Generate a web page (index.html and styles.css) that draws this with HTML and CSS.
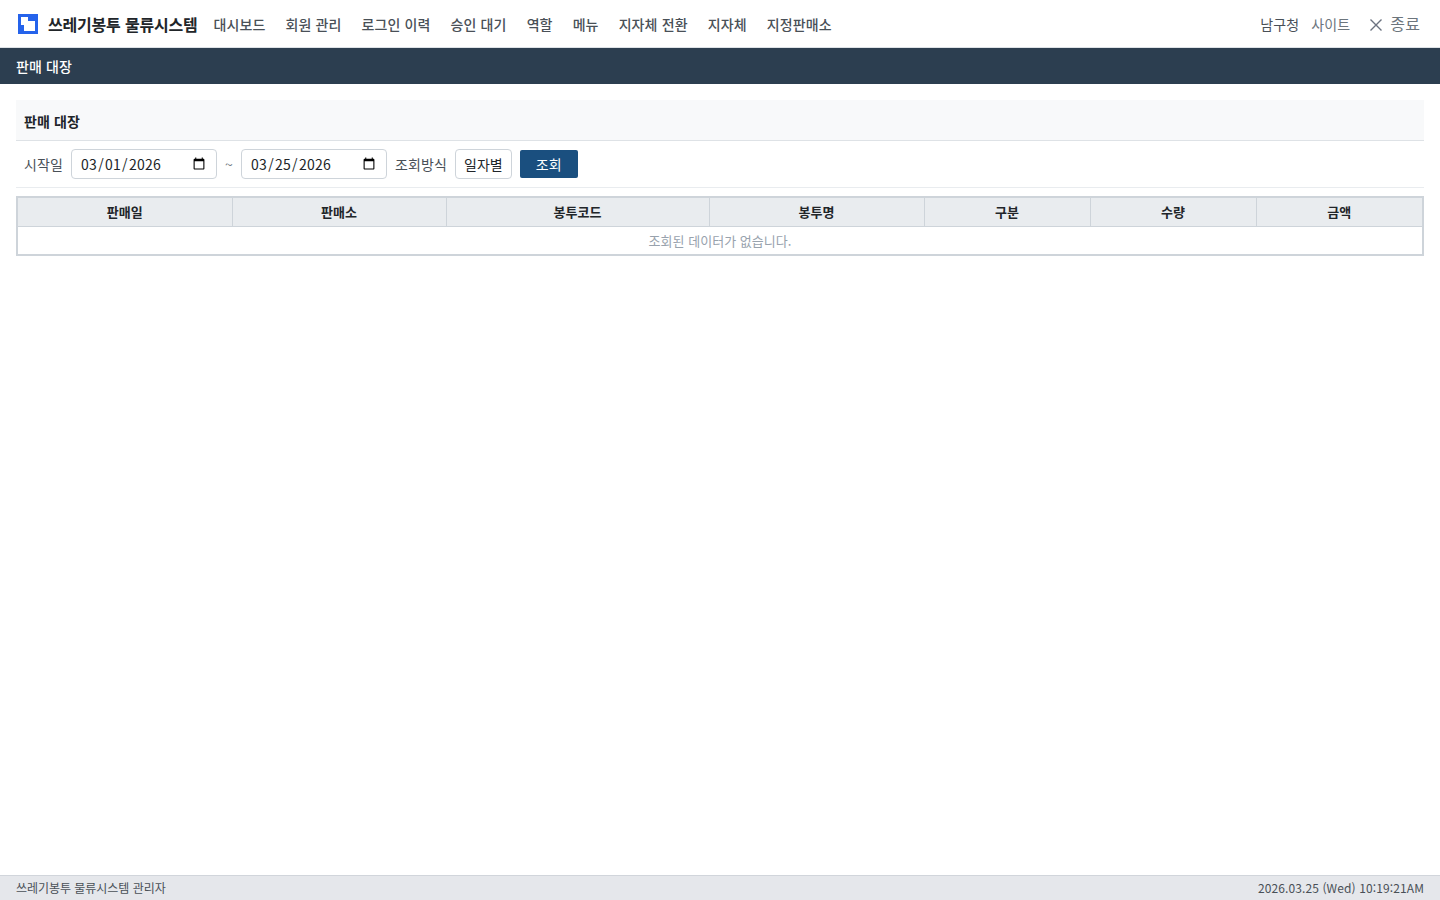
FILE: index.html
```html
<!DOCTYPE html>
<html lang="ko">
<head>
    <meta charset="UTF-8">
    <meta name="viewport" content="width=device-width, initial-scale=1.0">
    <title>판매 대장</title>
    <link rel="stylesheet" href="styles.css">
</head>
<body>
    <header class="topbar">
        <div class="brand">
            <svg class="brand-logo" width="20" height="20" viewBox="0 0 20 20">
                <rect width="20" height="20" fill="#2563eb"/>
                <path d="M3 3H10V7H17V17H6V11H3Z" fill="#fff"/>
            </svg>
            <span class="brand-name">쓰레기봉투 물류시스템</span>
        </div>
        <nav class="nav-menu">
            <a>대시보드</a>
            <a>회원 관리</a>
            <a>로그인 이력</a>
            <a>승인 대기</a>
            <a>역할</a>
            <a>메뉴</a>
            <a>지자체 전환</a>
            <a>지자체</a>
            <a>지정판매소</a>
        </nav>
        <div class="user-menu">
            <span class="user-org">남구청</span>
            <span class="user-site">사이트</span>
            <span class="user-exit">
                <svg width="14" height="14" viewBox="0 0 14 14"><path d="M1.5 1.5L12.5 12.5M12.5 1.5L1.5 12.5" stroke="#6b7280" stroke-width="1.4" fill="none"/></svg>
                <span>종료</span>
            </span>
        </div>
    </header>
    <div class="title-bar">판매 대장</div>
    <main class="content">
        <h2 class="panel-title">판매 대장</h2>
        <div class="search-row">
            <label>시작일</label>
            <input class="date-input" type="date" value="2026-03-01">
            <span class="tilde">~</span>
            <input class="date-input" type="date" value="2026-03-25">
            <label>조회방식</label>
            <button class="btn-mode" type="button">일자별</button>
            <button class="btn-search" type="button">조회</button>
        </div>
        <table class="grid">
            <thead>
                <tr>
                    <th class="col-date">판매일</th>
                    <th class="col-shop">판매소</th>
                    <th class="col-code">봉투코드</th>
                    <th class="col-name">봉투명</th>
                    <th class="col-type">구분</th>
                    <th class="col-qty">수량</th>
                    <th class="col-amount">금액</th>
                </tr>
            </thead>
            <tbody>
                <tr><td colspan="7">조회된 데이터가 없습니다.</td></tr>
            </tbody>
        </table>
    </main>
    <footer class="footer">
        <span class="footer-name">쓰레기봉투 물류시스템 관리자</span>
        <span class="footer-time">2026.03.25 (Wed) 10:19:21AM</span>
    </footer>
</body>
</html>
```

FILE: styles.css
```css
* {
    box-sizing: border-box;
}
html, body {
    height: 100%;
}
body {
    margin: 0;
    display: flex;
    flex-direction: column;
    height: 900px;
    overflow: hidden;
    background: #fff;
    color: #212529;
    font-family: "Noto Sans CJK KR", "Noto Sans", sans-serif;
    font-size: 14px;
    letter-spacing: 0.12px;
}
.topbar {
    height: 48px;
    display: flex;
    align-items: center;
    padding: 0 20px 0 18px;
    border-bottom: 1px solid #dee2e6;
}
.brand {
    display: flex;
    align-items: center;
    gap: 10px;
}
.brand-name {
    font-size: 16px;
    font-weight: 700;
    letter-spacing: -0.2px;
    color: #212529;
}
.nav-menu {
    display: flex;
    gap: 20px;
    margin-left: 16px;
}
.nav-menu a {
    font-size: 14px;
    font-weight: 500;
    letter-spacing: 0.12px;
    color: #495057;
}
.user-menu {
    margin-left: auto;
    display: flex;
    align-items: center;
    font-size: 14px;
    color: #6c757d;
}
.user-org {
    color: #495057;
    margin-right: 12px;
}
.user-exit {
    display: flex;
    align-items: center;
    gap: 7px;
    margin-left: 19px;
    font-size: 16px;
}
.user-exit svg {
    margin-top: 3px;
}
.user-exit span {
    margin-top: -2px;
}
.title-bar {
    height: 36px;
    line-height: 36px;
    padding: 0 16px;
    background: #2c3e50;
    color: #fff;
    font-size: 14px;
    font-weight: 500;
}
.content {
    flex: 1;
    padding: 16px;
}
.panel-title {
    margin: 0;
    height: 41px;
    line-height: 42px;
    padding: 0 8px;
    background: #f8f9fa;
    border-bottom: 1px solid #dee2e6;
    font-size: 14px;
    font-weight: 700;
}
.search-row {
    display: flex;
    align-items: center;
    height: 47px;
    padding: 0 8px;
    gap: 8px;
    border-bottom: 1px solid #e9ecef;
    color: #495057;
}
.date-input {
    width: 146px;
    height: 30px;
    padding: 0 8px;
    border: 1px solid #ced4da;
    border-radius: 4px;
    background: #fff;
    color: #212529;
    font-family: inherit;
    font-size: 14px;
    letter-spacing: 0.3px;
}
.tilde {
    width: 8px;
    font-size: 14px;
    color: #6c757d;
}
.btn-mode {
    height: 30px;
    padding: 0 8px;
    border: 1px solid #ced4da;
    border-radius: 4px;
    background: #fff;
    color: #212529;
    font-family: inherit;
    font-size: 14px;
}
.btn-search {
    width: 58px;
    height: 28px;
    border: 0;
    border-radius: 2px;
    background: #1a4f7f;
    color: #fff;
    font-family: inherit;
    font-size: 14px;
}
.grid {
    width: 100%;
    margin-top: 8px;
    border-collapse: collapse;
    table-layout: fixed;
    border: 2px solid #ced4da;
    font-size: 13px;
    letter-spacing: 0.04px;
}
.grid th {
    height: 29px;
    padding: 0 0 1px;
    background: #e9ecef;
    border: 1px solid #ced4da;
    font-weight: 700;
    color: #212529;
}
.grid td {
    height: 29px;
    padding: 0;
    text-align: center;
    color: #98a2ad;
    font-size: 13px;
}
.col-date {
    width: 215px;
}
.col-shop {
    width: 214px;
}
.col-code {
    width: 263px;
}
.col-name {
    width: 215px;
}
.col-type, .col-qty {
    width: 166px;
}
.col-amount {
    width: 167px;
}
.footer {
    height: 25px;
    display: flex;
    align-items: center;
    justify-content: space-between;
    padding: 0 16px 1px;
    background: #e5e7eb;
    border-top: 1px solid #d1d5db;
    color: #495057;
    font-size: 12px;
}
.footer-name {
    letter-spacing: -0.04px;
}
.footer-time {
    letter-spacing: 0.11px;
}
```
